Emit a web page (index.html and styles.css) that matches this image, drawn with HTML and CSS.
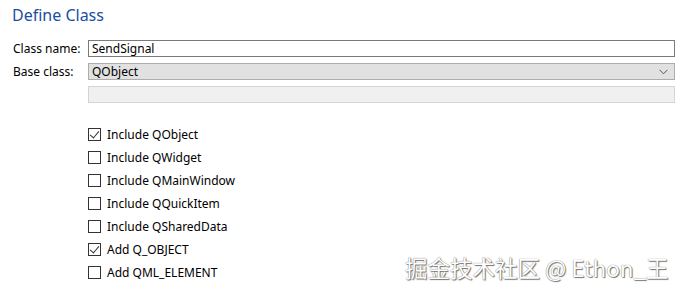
FILE: index.html
```html
<!DOCTYPE html>
<html>
<head>
  <meta charset="utf-8">
  <title>Define Class</title>
  <link rel="stylesheet" href="styles.css">
</head>
<body>
  <div class="page">
    <h1 class="title">Define Class</h1>

    <div class="form">
      <label class="label" for="class-name">Class name:</label>
      <div class="field input">SendSignal</div>

      <label class="label">Base class:</label>
      <div class="field combo">
        <span>QObject</span>
        <svg class="chevron" width="9" height="6" viewBox="0 0 9 6">
          <path d="M0.5 0.8 L4.5 4.8 L8.5 0.8" fill="none" stroke="#555" stroke-width="1"/>
        </svg>
      </div>

      <span></span>
      <div class="field disabled"></div>
    </div>

    <ul class="options">
      <li><span class="box checked"></span>Include QObject</li>
      <li><span class="box"></span>Include QWidget</li>
      <li><span class="box"></span>Include QMainWindow</li>
      <li><span class="box"></span>Include QQuickItem</li>
      <li><span class="box"></span>Include QSharedData</li>
      <li><span class="box checked"></span>Add Q_OBJECT</li>
      <li><span class="box"></span>Add QML_ELEMENT</li>
    </ul>
  </div>

  <div class="watermark">掘金技术社区 @ Ethon_王</div>
</body>
</html>
```

FILE: styles.css
```css
body {
  margin: 0;
  background-color: #fff;
  font-family: 'Noto Sans', 'Open Sans', Arial, sans-serif;
  font-size: 12px;
  color: #000;
}
.page {
  padding: 3px 5px 0 13px;
}
.title {
  margin: 0 0 13px -1px;
  font-size: 16px;
  font-weight: normal;
  color: #1b4ea0;
  line-height: 24px;
}
.form {
  display: grid;
  grid-template-columns: 75px 587px;
  row-gap: 6px;
  align-items: center;
}
.label {
  line-height: 17px;
}
.field {
  box-sizing: border-box;
  height: 17px;
  line-height: 15px;
  padding: 0 3px;
  border: 1px solid #7a7a7a;
  background-color: #fff;
}
.combo {
  display: flex;
  justify-content: space-between;
  align-items: center;
  background-color: #e1e1e1;
  border-color: #adadad;
  padding-right: 6px;
}
.disabled {
  background-color: #f0f0f0;
  border-color: #d4d4d4;
}
.options {
  list-style: none;
  margin: 20px 0 0 75px;
  padding: 0;
}
.options li {
  display: flex;
  align-items: center;
  height: 23px;
}
.box {
  box-sizing: border-box;
  width: 13px;
  height: 13px;
  border: 1px solid #333;
  margin-right: 6px;
  position: relative;
}
.box.checked::after {
  content: '';
  position: absolute;
  left: 3px;
  top: 0px;
  width: 4px;
  height: 8px;
  border: solid #333;
  border-width: 0 1px 1px 0;
  transform: rotate(40deg);
}
.watermark {
  position: absolute;
  left: 405px;
  top: 251px;
  font-family: 'Noto Sans CJK SC', sans-serif;
  font-size: 22.5px;
  color: #fff;
  text-shadow: 0 0 1px #555, 1px 1px 1px #777;
  white-space: nowrap;
}
```
